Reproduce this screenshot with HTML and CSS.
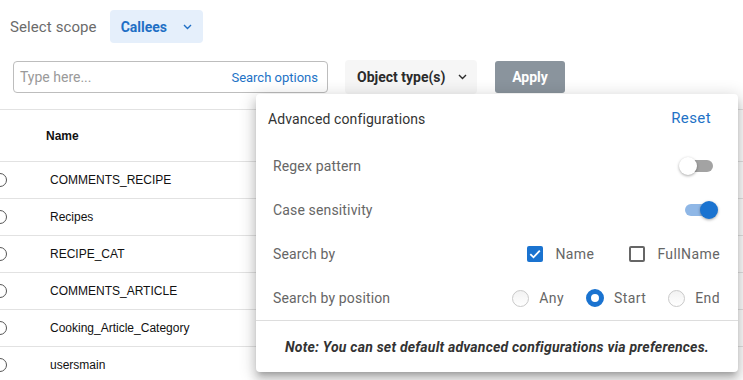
FILE: index.html
```html
<!DOCTYPE html>
<html lang="en">
<head>
    <meta charset="UTF-8">
    <title>Search objects</title>
    <link rel="stylesheet" href="styles.css">
</head>
<body>

    <div class="scope-bar">
        <span class="scope-label">Select scope</span>
        <button class="scope-btn">Callees
            <svg class="chevron" width="9" height="6" viewBox="0 0 9 6"><path d="M1 1l3.5 3.5L8 1" fill="none" stroke="currentColor" stroke-width="1.4"/></svg>
        </button>
    </div>

    <div class="search-bar">
        <div class="search-box">
            <span class="placeholder">Type here...</span>
            <span class="search-options">Search options</span>
        </div>
        <button class="type-btn">Object type(s)
            <svg class="chevron" width="9" height="6" viewBox="0 0 9 6"><path d="M1 1l3.5 3.5L8 1" fill="none" stroke="currentColor" stroke-width="1.4"/></svg>
        </button>
        <button class="apply-btn">Apply</button>
    </div>

    <div class="objects">
        <div class="objects-head">
            <span class="col-select"></span>
            <span class="col-name">Name</span>
        </div>
        <div class="objects-row"><span class="col-select"><i class="row-radio"></i></span><span class="col-name">COMMENTS_RECIPE</span></div>
        <div class="objects-row"><span class="col-select"><i class="row-radio"></i></span><span class="col-name">Recipes</span></div>
        <div class="objects-row"><span class="col-select"><i class="row-radio"></i></span><span class="col-name">RECIPE_CAT</span></div>
        <div class="objects-row"><span class="col-select"><i class="row-radio"></i></span><span class="col-name">COMMENTS_ARTICLE</span></div>
        <div class="objects-row"><span class="col-select"><i class="row-radio"></i></span><span class="col-name">Cooking_Article_Category</span></div>
        <div class="objects-row"><span class="col-select"><i class="row-radio"></i></span><span class="col-name">usersmain</span></div>
    </div>

    <!-- Advanced configurations popover -->
    <div class="config-popup">
        <div class="config-head">
            <span class="config-title">Advanced configurations</span>
            <span class="config-reset">Reset</span>
        </div>

        <div class="config-row">
            <span class="config-label">Regex pattern</span>
            <span class="switch"><span class="switch-thumb"></span></span>
        </div>
        <div class="config-row">
            <span class="config-label">Case sensitivity</span>
            <span class="switch on"><span class="switch-thumb"></span></span>
        </div>
        <div class="config-row">
            <span class="config-label">Search by</span>
            <div class="config-options wide">
                <label class="option">
                    <span class="checkbox checked">
                        <svg width="12" height="10" viewBox="0 0 12 10"><path d="M1.3 5.2l3.2 3.1L10.8 1.6" fill="none" stroke="#fff" stroke-width="1.8"/></svg>
                    </span>
                    Name
                </label>
                <label class="option">
                    <span class="checkbox"></span>
                    FullName
                </label>
            </div>
        </div>
        <div class="config-row">
            <span class="config-label">Search by position</span>
            <div class="config-options">
                <label class="option radio-option"><span class="radio"></span>Any</label>
                <label class="option radio-option"><span class="radio checked"></span>Start</label>
                <label class="option radio-option"><span class="radio"></span>End</label>
            </div>
        </div>

        <div class="config-note">Note: You can set default advanced configurations via preferences.</div>
    </div>

</body>
</html>
```

FILE: styles.css
```css
/* General page */
body {
    margin: 0;
    font-family: Roboto, 'Noto Sans', sans-serif;
    background-color: #ffffff;
    color: #333;
    position: relative;
    overflow: hidden;
    height: 380px;
}

button {
    font-family: inherit;
    border: none;
    cursor: pointer;
}

/* Scope selector */
.scope-bar {
    display: flex;
    align-items: center;
    gap: 13px;
    padding: 10px 10px 0;
    height: 33px;
}

.scope-label {
    font-size: 15px;
    letter-spacing: 0.1px;
    color: #6b6b6b;
}

.scope-btn {
    display: flex;
    align-items: center;
    gap: 16px;
    height: 33px;
    width: 93px;
    padding: 0 0 0 11px;
    background-color: #e5effb;
    border-radius: 4px;
    color: #1f6fc5;
    font-size: 14px;
    font-weight: 700;
}

.chevron {
    display: block;
}

/* Search bar */
.search-bar {
    display: flex;
    align-items: center;
    gap: 17px;
    padding: 17px 0 0 13px;
}

.search-box {
    display: flex;
    align-items: center;
    justify-content: space-between;
    width: 315px;
    height: 32px;
    box-sizing: border-box;
    padding: 0 9px 0 6px;
    border: 1px solid #bdbdbd;
    border-radius: 4px;
}

.placeholder {
    font-size: 14px;
    color: #9a9a9a;
}

.search-options {
    font-size: 13px;
    color: #2272c6;
}

.type-btn {
    display: flex;
    align-items: center;
    gap: 13px;
    height: 34px;
    width: 132px;
    padding: 0 0 0 12px;
    background-color: #f6f6f6;
    border-radius: 4px;
    color: #2b2b2b;
    font-size: 14px;
    font-weight: 700;
}

.apply-btn {
    height: 32px;
    width: 70px;
    margin-left: 1px;
    background-color: #8a949d;
    border-radius: 3px;
    color: #ffffff;
    font-size: 14px;
    font-weight: 700;
}

/* Objects list */
.objects {
    margin-top: 15px;
    font-family: 'Liberation Sans', Arial, sans-serif;
    font-size: 12px;
    color: #111;
}

.objects-head,
.objects-row {
    display: flex;
    align-items: center;
    border-top: 1px solid #e2e2e2;
}

.objects-head {
    height: 51px;
    font-weight: 700;
}

.objects-row {
    height: 36px;
}

.col-select {
    width: 46px;
    display: flex;
    align-items: center;
}

.objects-row .col-name {
    padding-left: 4px;
}

.row-radio {
    display: block;
    width: 12px;
    height: 12px;
    margin-left: -7px;
    border: 1px solid #555;
    border-radius: 50%;
}

/* Advanced configurations popover */
.config-popup {
    position: absolute;
    top: 94px;
    left: 256px;
    width: 482px;
    height: 278px;
    box-sizing: border-box;
    background-color: #ffffff;
    border-radius: 4px;
    box-shadow: 0 5px 5px -3px rgba(0, 0, 0, 0.2),
                0 8px 10px 1px rgba(0, 0, 0, 0.14),
                0 3px 16px 3px rgba(0, 0, 0, 0.14);
}

.config-head {
    display: flex;
    align-items: center;
    justify-content: space-between;
    height: 50px;
    padding: 0 27px 0 12px;
}

.config-title {
    font-size: 14px;
    letter-spacing: 0.1px;
    color: #333;
}

.config-reset {
    font-size: 15px;
    letter-spacing: 0.4px;
    color: #2272c6;
    margin-top: -2px;
}

.config-row {
    display: flex;
    align-items: center;
    justify-content: space-between;
    height: 44px;
    padding: 0 18px 0 17px;
}

.config-label {
    font-size: 14px;
    letter-spacing: 0.15px;
    color: #666;
}

/* Switches */
.switch {
    position: relative;
    width: 31px;
    height: 12px;
    margin-right: 7px;
    border-radius: 6px;
    background-color: #a3a3a3;
}

.switch-thumb {
    position: absolute;
    top: -3px;
    left: -3px;
    width: 18px;
    height: 18px;
    border-radius: 50%;
    background-color: #ffffff;
    box-shadow: 0 1px 3px rgba(0, 0, 0, 0.35);
}

.switch.on {
    background-color: #8fb7e6;
    margin-right: 4px;
}

.switch.on .switch-thumb {
    left: 15px;
    background-color: #1a73d0;
}

/* Checkboxes and radios */
.config-options {
    display: flex;
    align-items: center;
    gap: 22px;
}

.config-options.wide {
    gap: 35px;
}

.option {
    display: flex;
    align-items: center;
    gap: 12px;
    font-size: 14px;
    letter-spacing: 0.4px;
    color: #666;
}

.radio-option {
    gap: 10px;
}

.checkbox {
    display: flex;
    align-items: center;
    justify-content: center;
    width: 16px;
    height: 16px;
    box-sizing: border-box;
    border: 2px solid #666;
    border-radius: 2px;
}

.checkbox.checked {
    border: none;
    background-color: #1a73d0;
}

.radio {
    width: 17px;
    height: 17px;
    box-sizing: border-box;
    border: 1px solid #c9c9c9;
    border-radius: 50%;
    background: linear-gradient(#f2f2f2, #ffffff);
}

.radio.checked {
    width: 18px;
    height: 18px;
    border: 5px solid #1a73d0;
    background: #ffffff;
}

/* Footer note */
.config-note {
    border-top: 1px solid #dddddd;
    height: 51px;
    display: flex;
    align-items: center;
    justify-content: center;
    font-size: 14px;
    font-style: italic;
    font-weight: 700;
    color: #333;
    letter-spacing: 0.22px;
}
```
